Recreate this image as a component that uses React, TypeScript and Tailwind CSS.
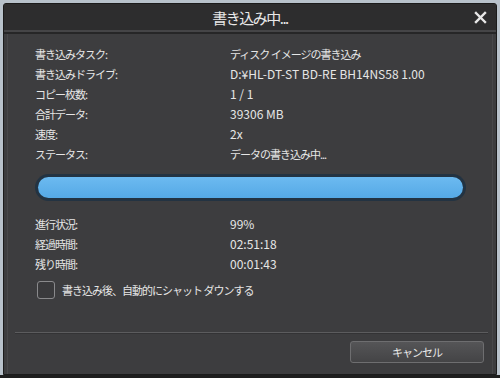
import React from "react";

const info = [
  { label: "書き込みタスク:", value: "ディスク イメージの書き込み", jp: true },
  { label: "書き込みドライブ:", value: "D:¥HL-DT-ST BD-RE BH14NS58 1.00", jp: false },
  { label: "コピー枚数:", value: "1 / 1", jp: false },
  { label: "合計データ:", value: "39306 MB", jp: false },
  { label: "速度:", value: "2x", jp: false },
  { label: "ステータス:", value: "データの書き込み中...", jp: true },
];

const progress = [
  { label: "進行状況:", value: "99%", jp: false },
  { label: "経過時間:", value: "02:51:18", jp: false },
  { label: "残り時間:", value: "00:01:43", jp: false },
];

const Row = ({ label, value, jp }: { label: string; value: string; jp: boolean }) => (
  <div className="flex h-[20px] items-center">
    <span className="w-[195px] text-[11px] tracking-[-1px]">{label}</span>
    <span className={jp ? "text-[11px] tracking-[-1px] whitespace-pre" : "text-[12px]"}>{value}</span>
  </div>
);

const App: React.FC = () => {
  return (
    <div
      className="w-[500px] h-[378px] bg-[#b8c2cb] pt-[3px] px-[3px] flex flex-col text-[#e6e6e6] text-[12px]"
      style={{ fontFamily: '"Noto Sans CJK JP", "Liberation Sans", sans-serif' }}
    >
      <div className="h-[372px] flex flex-col rounded-t-[3px] border border-[#1b1b1b] bg-[#3d3d3f] overflow-hidden">
        {/* title bar */}
        <div className="relative h-[26px] bg-[#2d2d2e] flex items-center justify-center">
          <span className="text-[15px] tracking-[-1.5px] text-[#e8e8e8] leading-none">書き込み中...</span>
          <svg
            className="absolute right-[9px] top-[7px]"
            width="13"
            height="13"
            viewBox="0 0 13 13"
          >
            <path d="M2 2 L11 11 M11 2 L2 11" stroke="#e8e8e8" strokeWidth="2.4" strokeLinecap="square" />
          </svg>
        </div>
        <div className="h-[2px] bg-[#454547]" />
        <div className="h-[2px] bg-[#262627]" />

        {/* body */}
        <div className="flex-1 flex flex-col mx-[3px] border-x border-[#48484a] pl-[27px] pr-[26px] pt-[10px]">
          {info.map((r) => (
            <Row key={r.label} {...r} />
          ))}

          <div className="mt-[10px] h-[27px] rounded-full bg-[#233342] p-[3px] flex">
            <div className="flex-1 rounded-full bg-gradient-to-b from-[#6cbaf0] to-[#55a9e6]" />
          </div>

          <div className="mt-[13px]">
            {progress.map((r) => (
              <Row key={r.label} {...r} />
            ))}
          </div>

          <div className="mt-[7px] flex items-center gap-[7px] ml-[2px]">
            <div className="w-[18px] h-[18px] rounded-[3px] border border-[#8a8a8c] bg-[#3a3a3c]" />
            <span className="text-[11px] tracking-[-1px] whitespace-pre">書き込み後、自動的にシャット ダウンする</span>
          </div>

          <div className="mt-[33px] -ml-[20px] mr-[-22px] h-[2px] bg-[#5c5c5e] border-b border-[#333335]" />

          <div className="mt-[7px] flex justify-end mr-[-18px]">
            <button className="w-[134px] h-[22px] rounded-[3px] border border-[#6e6e70] bg-gradient-to-b from-[#555557] to-[#444446] text-[11px] tracking-[-1px] text-[#e8e8e8]">
              キャンセル
            </button>
          </div>
        </div>
      </div>
      <div className="h-[3px] bg-[#1e1e1e] -mx-[3px]" />
    </div>
  );
};

export default App;
